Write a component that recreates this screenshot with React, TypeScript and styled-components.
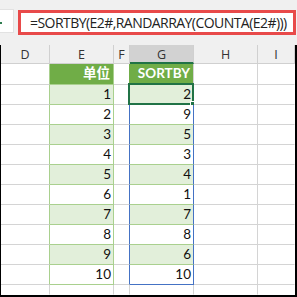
import React from "react";
import styled, { createGlobalStyle, css } from "styled-components";

const Global = createGlobalStyle`
  html, body { margin: 0; padding: 0; background: #ffffff; }
  body { width: 297px; height: 297px; overflow: hidden; }
`;

const C = {
  grid: "#d4d4d4",
  green: "#70ad47",
  band: "#e2efda",
  tableLine: "#a9d08e",
  blue: "#4472c4",
  active: "#217346",
  headBg: "#f0f0f0",
  headSel: "#d2d2d2",
  headLine: "#d0d0d0",
};

const Frame = styled.div`
  width: 297px;
  height: 297px;
  background: ${C.headBg};
  display: flex;
  flex-direction: column;
  font-family: "Lato", "Noto Sans CJK SC", sans-serif;
`;

const FormulaArea = styled.div`
  height: 45px;
  box-sizing: border-box;
  padding-top: 9px;
  display: flex;
  align-items: flex-start;
  gap: 4px;
`;

const NameBox = styled.div`
  width: 14px;
  height: 24px;
  background: #ffffff;
  border: 1px solid #e2e2e2;
  border-left: none;
  box-sizing: border-box;
  position: relative;
`;

const NameMark = styled.span`
  position: absolute;
  left: 0;
  top: 12px;
  width: 2px;
  height: 2px;
  background: #2e7d4f;
`;

const FormulaBox = styled.div`
  width: 278px;
  height: 25px;
  margin-top: 1px;
  background: #ffffff;
  border: 3px solid #e84a4a;
  box-sizing: border-box;
  display: flex;
  align-items: center;
  padding-left: 9px;
  font-family: "Open Sans", sans-serif;
  font-size: 14px;
  letter-spacing: -0.55px;
  color: #222;
  white-space: nowrap;
  overflow: hidden;
`;

const Sheet = styled.div`
  flex: 1;
  display: grid;
  grid-template-columns: 49px 64px 16px 64px 64px 1fr;
  grid-template-rows: 19px 21px repeat(10, 20px) 1fr;
  border-left: 1px solid #000;
  border-right: 2px solid #000;
  border-bottom: 2px solid #000;
  box-sizing: border-box;
  background: #ffffff;
`;

const ColHead = styled.div<{ $sel?: boolean }>`
  background: ${(p) => (p.$sel ? C.headSel : C.headBg)};
  border-right: 1px solid ${C.headLine};
  border-bottom: ${(p) => (p.$sel ? `2px solid ${C.active}` : `1px solid ${C.headLine}`)};
  box-sizing: border-box;
  display: flex;
  align-items: center;
  justify-content: center;
  font-family: "Open Sans", sans-serif;
  font-size: 12.5px;
  color: #333;
  padding-top: 1px;
`;

type CellProps = {
  $bg?: string;
  $right?: string;
  $bottom?: string;
  $head?: boolean;
};

const Cell = styled.div<CellProps>`
  position: relative;
  background: ${(p) => p.$bg || "#ffffff"};
  border-right: 1px solid ${(p) => p.$right || C.grid};
  border-bottom: 1px solid ${(p) => p.$bottom || C.grid};
  box-sizing: border-box;
  display: flex;
  align-items: flex-end;
  justify-content: flex-end;
  padding: 0 2px 3px 0;
  font-size: 13.5px;
  line-height: 1;
  color: #111;
  ${(p) =>
    p.$head &&
    css`
      color: #ffffff;
      font-weight: 700;
      padding-bottom: 4px;
      padding-right: 3px;
    `}
`;

const ActiveBorder = styled.div`
  position: absolute;
  left: -2px;
  top: -2px;
  right: -1px;
  bottom: -1px;
  border: 2px solid ${C.active};
  pointer-events: none;
`;

const FillHandle = styled.div`
  position: absolute;
  right: -4px;
  bottom: -4px;
  width: 5px;
  height: 5px;
  background: ${C.active};
  border: 1px solid #ffffff;
`;

const units = [1, 2, 3, 4, 5, 6, 7, 8, 9, 10];
const sorted = [2, 9, 5, 3, 4, 1, 7, 8, 6, 10];
const cols = ["D", "E", "F", "G", "H", "I"];

export default function App() {
  return (
    <>
      <Global />
      <Frame>
        <FormulaArea>
          <NameBox>
            <NameMark />
          </NameBox>
          <FormulaBox>=SORTBY(E2#,RANDARRAY(COUNTA(E2#)))</FormulaBox>
        </FormulaArea>
        <Sheet>
          {cols.map((c) => (
            <ColHead key={c} $sel={c === "G"}>
              {c}
            </ColHead>
          ))}
          <Cell $right={C.tableLine} />
          <Cell $bg={C.green} $right={C.tableLine} $bottom={C.tableLine} $head>
            单位
          </Cell>
          <Cell $right={C.green} />
          <Cell $bg={C.green} $right={C.grid} $bottom={C.tableLine} $head>
            SORTBY
          </Cell>
          <Cell />
          <Cell $right="transparent" />
          {units.map((u, i) => {
            const band = i % 2 === 0 ? C.band : "#ffffff";
            const last = i === units.length - 1;
            return (
              <React.Fragment key={u}>
                <Cell $right={C.tableLine} />
                <Cell $bg={band} $right={C.tableLine} $bottom={C.tableLine}>
                  {u}
                </Cell>
                <Cell $right={C.blue} />
                <Cell $bg={band} $right={C.blue} $bottom={last ? C.blue : C.tableLine}>
                  {sorted[i]}
                  {i === 0 && (
                    <>
                      <ActiveBorder />
                      <FillHandle />
                    </>
                  )}
                </Cell>
                <Cell />
                <Cell $right="transparent" />
              </React.Fragment>
            );
          })}
          <Cell $bottom="transparent" />
          <Cell $bottom="transparent" />
          <Cell $bottom="transparent" />
          <Cell $bottom="transparent" />
          <Cell $bottom="transparent" />
          <Cell $right="transparent" $bottom="transparent" />
        </Sheet>
      </Frame>
    </>
  );
}
